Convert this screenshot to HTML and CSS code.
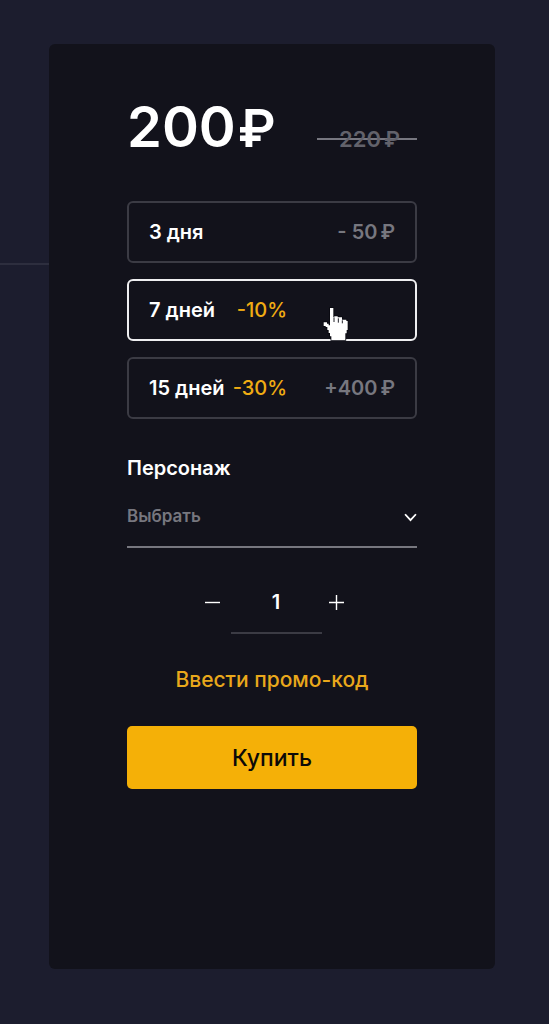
FILE: index.html
```html
<!DOCTYPE html>
<html lang="ru">
<head>
  <meta charset="utf-8">
  <meta name="viewport" content="width=device-width, initial-scale=1">
  <title>Покупка</title>
  <link rel="stylesheet" href="styles.css">
</head>
<body>
  <div class="page">
    <div class="rail"><div class="rail-line"></div></div>
    <form class="card">
      <div class="price">
        <strong class="price-now">200<span class="ruble">₽</span></strong>
        <s class="price-old">220<span class="ruble">₽</span></s>
      </div>

      <div class="plans" role="radiogroup" aria-label="Срок">
        <label class="plan">
          <input class="plan-radio" type="radio" name="plan">
          <span class="plan-info"><span class="plan-name">3 дня</span></span>
          <span class="plan-cost">- 50<span class="ruble">₽</span></span>
        </label>
        <label class="plan">
          <input class="plan-radio" type="radio" name="plan" checked>
          <span class="plan-info"><span class="plan-name">7 дней</span><span class="plan-sale">-10%</span></span>
          <svg class="pointer" viewBox="0 0 75 102" aria-hidden="true">
            <path d="M21 3H31V30H34V28H44V31H57V38H70V42H74V69H71V79H67V99H25V88H21V78H17V69H13V60H8V57H2V46H12V50H17V55H21Z" fill="#fff" stroke="#090910" stroke-width="5" paint-order="stroke"/>
            <path d="M33 31V45M46 34V47M58 40V49" fill="none" stroke="#22222b" stroke-width="3"/>
          </svg>
        </label>
        <label class="plan">
          <input class="plan-radio" type="radio" name="plan">
          <span class="plan-info"><span class="plan-name">15 дней</span><span class="plan-sale">-30%</span></span>
          <span class="plan-cost">+400<span class="ruble">₽</span></span>
        </label>
      </div>

      <label class="field-label" for="hero">Персонаж</label>
      <div class="field">
        <select class="field-select" id="hero"><option>Выбрать</option></select>
        <svg class="field-arrow" viewBox="0 0 12 8" aria-hidden="true"><path d="M1 1L6 6.5L11 1" fill="none" stroke="#fff" stroke-width="1.7"/></svg>
      </div>

      <div class="stepper">
        <button class="step step-minus" type="button" aria-label="Меньше"><svg viewBox="0 0 15 15"><path d="M0 7.5H15" stroke="#fff" stroke-width="1.4"/></svg></button>
        <input class="count" type="text" inputmode="numeric" value="1" aria-label="Количество">
        <button class="step step-plus" type="button" aria-label="Больше"><svg viewBox="0 0 15 15"><path d="M0 7.5H15M7.5 0V15" stroke="#fff" stroke-width="1.4"/></svg></button>
      </div>

      <a class="promo" href="#">Ввести промо-код</a>
      <button class="buy" type="submit">Купить</button>
    </form>
  </div>
</body>
</html>
```
FILE: styles.css
```css
* {
  box-sizing: border-box;
}

body {
  margin: 0;
  background: #1c1d2e;
  color: #fff;
  font: 500 20px/24px Inter, "Open Sans", sans-serif;
}

button,
input,
select {
  font: inherit;
  color: inherit;
}

.page {
  display: grid;
  grid-template-columns: 49px minmax(0, 1fr) 54px;
  min-height: 100vh;
  padding: 44px 0 55px;
}

.rail-line {
  margin-top: 219px;
  border-top: 2px solid #2d2e3e;
}

.card {
  display: flex;
  flex-direction: column;
  padding: 51px 78px;
  border-radius: 6px;
  background: #12121b;
}

.price {
  display: flex;
  align-items: baseline;
  justify-content: space-between;
  margin-bottom: 40px;
}

.price-now {
  font-size: 56px;
  line-height: 64px;
  font-weight: 600;
}

.price-now .ruble {
  margin-left: 2px;
  font-size: 52px;
}

.price-old {
  padding: 0 17px 0 22px;
  background: linear-gradient(#777780, #777780) center / 100% 2px no-repeat;
  color: #62626b;
  font-size: 22px;
  font-weight: 600;
  text-decoration: none;
}

.ruble {
  margin-left: 3px;
}

.plans {
  display: grid;
  gap: 16px;
}

.plan {
  position: relative;
  display: flex;
  align-items: center;
  justify-content: space-between;
  min-height: 62px;
  padding: 0 20px;
  border: 2px solid #3b3b44;
  border-radius: 6px;
  cursor: pointer;
}

.plan:has(:checked) {
  border-color: #eeeef0;
}

.plan-radio {
  position: absolute;
  inset: 0;
  margin: 0;
  opacity: 0;
}

.plan-info {
  display: flex;
  flex: 0 0 138px;
  justify-content: space-between;
  white-space: nowrap;
}

.plan-name,
.plan-cost,
.field-label,
.count {
  font-weight: 600;
}

.plan-sale {
  color: #f0ac13;
}

.plan-cost {
  color: #77777f;
}

.pointer {
  position: absolute;
  right: 67px;
  bottom: -2px;
  width: 25px;
  height: 34px;
  overflow: visible;
}

.field-label {
  margin-top: 37px;
}

.field {
  display: grid;
  align-items: center;
  margin-top: 12px;
  border-bottom: 2px solid #77777f;
}

.field-select,
.field-arrow {
  grid-area: 1 / 1;
}

.field-select {
  appearance: none;
  width: 100%;
  height: 54px;
  padding: 0 24px 6px 0;
  border: 0;
  background: transparent;
  color: #77777f;
  font-size: 17px;
  font-weight: 600;
}

.field-arrow {
  justify-self: end;
  width: 13px;
  height: 9px;
  margin-bottom: 4px;
  pointer-events: none;
}

.stepper {
  display: flex;
  justify-content: center;
  margin-top: 23px;
  padding-left: 4px;
}

.step {
  width: 15px;
  height: 62px;
  padding: 0;
  border: 0;
  background: none;
}

.step svg {
  display: block;
  width: 15px;
  height: 15px;
}

.step-minus {
  margin-right: 11px;
}

.step-plus {
  margin-left: 7px;
}

.count {
  width: 91px;
  height: 63px;
  padding: 0;
  border: 0;
  border-bottom: 2px solid #3b3b44;
  background: transparent;
  text-align: center;
}

.promo {
  align-self: center;
  margin-top: 34px;
  color: #e9a81b;
  font-size: 21px;
  text-decoration: none;
}

.buy {
  height: 63px;
  margin-top: 34px;
  border: 0;
  border-radius: 5px;
  background: #f5b007;
  color: #0c0a08;
  font-size: 23px;
}
```
